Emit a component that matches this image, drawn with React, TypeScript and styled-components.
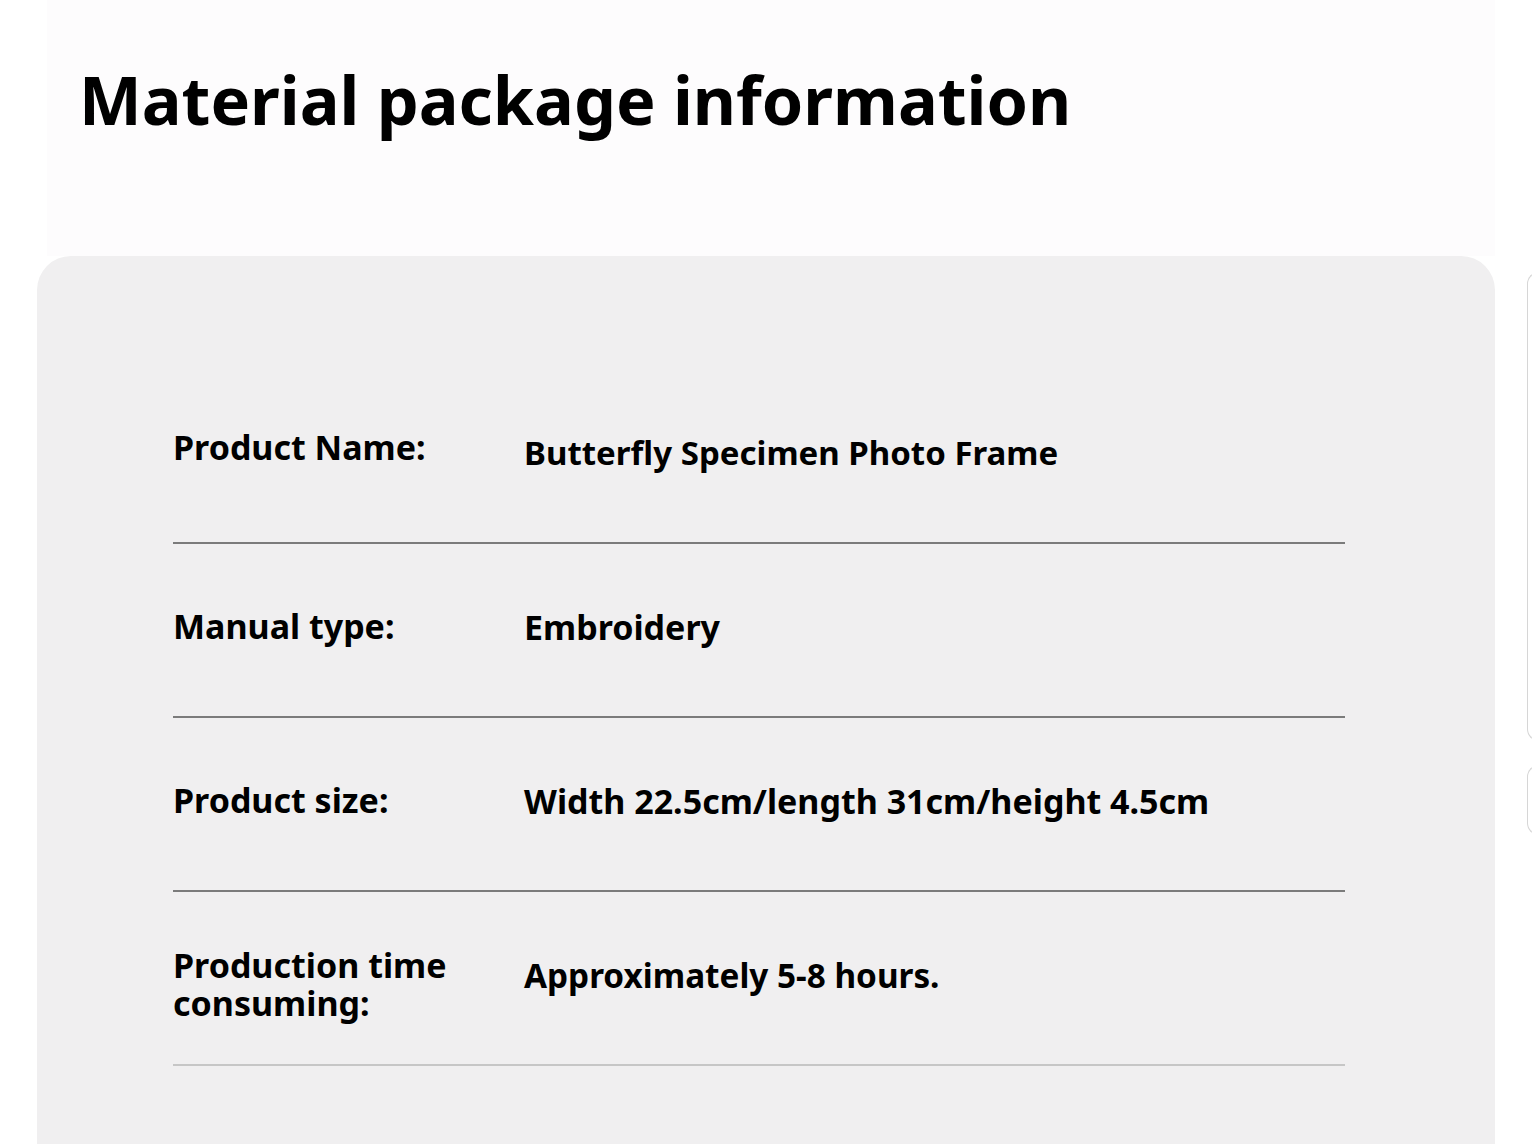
import styled, { createGlobalStyle } from "styled-components";

const GlobalStyle = createGlobalStyle`
    html, body {
        margin: 0;
        padding: 0;
        background: #ffffff;
        font-family: "Noto Sans", "Open Sans", sans-serif;
        color: #000000;
    }
`;

const Page = styled.div`
    display: flex;
    width: 1532px;
    height: 1144px;
    overflow: hidden;
`;

const Main = styled.main`
    display: flex;
    flex-direction: column;
    flex: 0 0 1495px;
`;

const Header = styled.header`
    margin-left: 47px;
    padding: 54px 0 0 32px;
    height: 202px;
    background: #fdfcfd;
    h1 {
        margin: 0;
        font-size: 66.5px;
        font-weight: 700;
        line-height: normal;
        letter-spacing: 0;
    }
`;

const Card = styled.section`
    margin-left: 37px;
    flex: 1;
    border-radius: 34px 34px 0 0;
    background: #f0eff0;
    padding: 116px 150px 0 136px;
`;

const Row = styled.div<{ $faint?: boolean }>`
    display: grid;
    grid-template-columns: 351px 1fr;
    align-items: center;
    height: 172px;
    padding-bottom: 8px;
    box-sizing: border-box;
    border-bottom: 2px solid ${(p) => (p.$faint ? "#c6c6c6" : "#7b7b7b")};
    margin-bottom: 2px;
`;

const Label = styled.div<{ $shift?: number }>`
    font-size: 34px;
    font-weight: 700;
    line-height: 38px;
    margin-top: ${(p) => p.$shift ?? 0}px;
`;

const Value = styled.div<{ $size?: number }>`
    font-size: ${(p) => p.$size ?? 34}px;
    font-weight: 700;
    line-height: 38px;
`;

const Side = styled.aside`
    display: flex;
    flex-direction: column;
    gap: 24px;
    padding: 272px 0 0 32px;
`;

const SideBox = styled.div<{ $h: number }>`
    width: 40px;
    height: ${(p) => p.$h}px;
    border: 1px solid #d6d6d6;
    border-right: none;
    border-radius: 12px 0 0 12px;
    box-sizing: border-box;
`;

const rows = [
    { label: "Product Name:", value: "Butterfly Specimen Photo Frame", size: 33, shift: -12 },
    { label: "Manual type:", value: "Embroidery", size: 34, shift: -2 },
    { label: "Product size:", value: "Width 22.5cm/length 31cm/height 4.5cm", size: 34, shift: -2 },
    { label: "Production time consuming:", value: "Approximately 5-8 hours.", size: 33.3, shift: 18 },
];

const App = () => {
    return (
        <Page>
            <GlobalStyle />
            <Main>
                <Header>
                    <h1>Material package information</h1>
                </Header>
                <Card>
                    {rows.map((r, i) => (
                        <Row key={r.label} $faint={i === rows.length - 1}>
                            <Label $shift={r.shift}>{r.label}</Label>
                            <Value $size={r.size}>{r.value}</Value>
                        </Row>
                    ))}
                </Card>
            </Main>
            <Side>
                <SideBox $h={469} />
                <SideBox $h={70} />
            </Side>
        </Page>
    );
};

export default App;
